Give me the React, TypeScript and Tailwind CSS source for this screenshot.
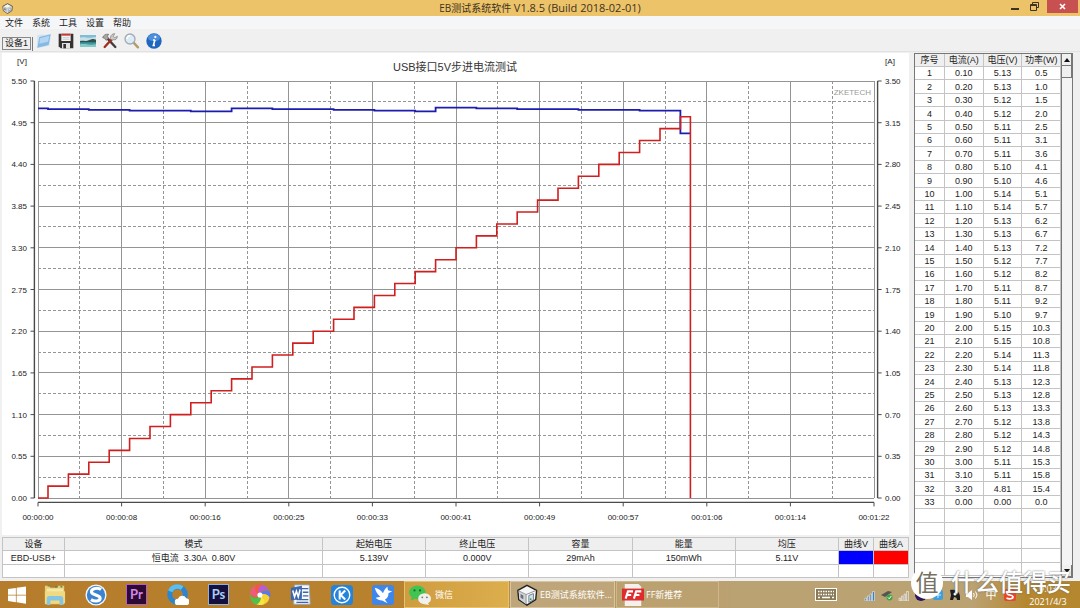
import type { ReactNode } from "react";

// --- Measured data ---
const voltages = [
  5.13, 5.13, 5.12, 5.12, 5.11, 5.11, 5.11, 5.1, 5.1, 5.14, 5.14, 5.13, 5.13, 5.13, 5.12, 5.12, 5.11,
  5.11, 5.1, 5.15, 5.15, 5.14, 5.14, 5.13, 5.13, 5.13, 5.12, 5.12, 5.12, 5.11, 5.11, 4.81, 0,
];
const powers = [
  0.5, 1.0, 1.5, 2.0, 2.5, 3.1, 3.6, 4.1, 4.6, 5.1, 5.7, 6.2, 6.7, 7.2, 7.7, 8.2, 8.7, 9.2, 9.7, 10.3,
  10.8, 11.3, 11.8, 12.3, 12.8, 13.3, 13.8, 14.3, 14.8, 15.3, 15.8, 15.4, 0,
];
const rows = voltages.map((v, i) => ({
  no: i + 1,
  current: i < 32 ? (i + 1) / 10 : 0,
  voltage: v,
  power: powers[i],
}));

const timeLabels = [
  "00:00:00", "00:00:08", "00:00:16", "00:00:25", "00:00:33", "00:00:41",
  "00:00:49", "00:00:57", "00:01:06", "00:01:14", "00:01:22",
];

// --- Chart geometry ---
const LEFT = 36;
const RIGHT = 872;
const TOP = 28;
const BOTTOM = 445;
const MAX_V = 5.5;
const MAX_A = 3.5;
const FIRST_STEP = 10;
const STEP = 20.4;

const xAt = (i: number) => LEFT + ((RIGHT - LEFT) * i) / 10;
const yAt = (i: number) => TOP + ((BOTTOM - TOP) * i) / 10;
const scaleY = (value: number, max: number) => BOTTOM - (value / max) * (BOTTOM - TOP);

function stepPath(start: number, values: number[], max: number) {
  let d = `M${LEFT} ${scaleY(start, max)}`;
  values.forEach((v, i) => {
    d += `H${LEFT + FIRST_STEP + STEP * i}V${scaleY(v, max)}`;
  });
  return d + `H${LEFT + FIRST_STEP * 2 + STEP * (values.length - 1)}`;
}

const active = rows.slice(0, 32);
const voltagePath = stepPath(5.139, active.map((r) => r.voltage), MAX_V);
const currentPath = stepPath(0, active.map((r) => r.current), MAX_A) + `V${BOTTOM}`;

function Chart() {
  const ticks = Array.from({ length: 11 }, (_, i) => i);
  const halves = ticks.slice(0, 10);
  return (
    <svg
      viewBox="0 0 907 482"
      className="block w-full h-auto bg-white text-[8px]"
      role="img"
      aria-label="USB接口5V步进电流测试"
    >
      {/* Grid */}
      <g stroke="#949494" strokeDasharray="3 2" shapeRendering="crispEdges">
        {halves.map((i) => (
          <g key={i}>
            <line x1={xAt(i + 0.5)} x2={xAt(i + 0.5)} y1={TOP} y2={BOTTOM} />
            <line x1={LEFT} x2={RIGHT} y1={yAt(i + 0.5)} y2={yAt(i + 0.5)} />
          </g>
        ))}
      </g>
      <g stroke="#949494" shapeRendering="crispEdges">
        {ticks.map((i) => (
          <g key={i}>
            <line x1={xAt(i)} x2={xAt(i)} y1={TOP} y2={BOTTOM} />
            <line x1={LEFT} x2={RIGHT} y1={yAt(i)} y2={yAt(i)} />
          </g>
        ))}
      </g>

      {/* Axes */}
      <g stroke="#4a4a4a" fill="none" strokeWidth="1.4">
        <path d={`M32.4 ${TOP}V${BOTTOM}M875.6 ${TOP}V${BOTTOM}M${LEFT} 449.4H${RIGHT}`} />
        {ticks.map((i) => (
          <path key={i} d={`M28.5 ${yAt(i)}h4M875.6 ${yAt(i)}h4M${xAt(i)} 449.4v4`} strokeWidth="1" />
        ))}
      </g>
      <g fill="#222">
        {ticks.map((i) => (
          <g key={i}>
            <text x="25" y={yAt(i) + 3} textAnchor="end">{(MAX_V - i * 0.55).toFixed(2)}</text>
            <text x="883" y={yAt(i) + 3}>{(MAX_A - i * 0.35).toFixed(2)}</text>
            <text x={xAt(i)} y="467" textAnchor="middle">{timeLabels[i]}</text>
          </g>
        ))}
        <text x="20" y="11" textAnchor="middle">[V]</text>
        <text x="888" y="11" textAnchor="middle">[A]</text>
      </g>
      <text x="453" y="18" textAnchor="middle" fill="#333" className="text-[11px]">
        USB接口5V步进电流测试
      </text>
      <text x="869" y="42" textAnchor="end" fill="#999">
        ZKETECH
      </text>

      {/* Curves */}
      <path d={voltagePath} fill="none" stroke="#1c1cae" strokeWidth="1.8" />
      <path d={currentPath} fill="none" stroke="#d01f1f" strokeWidth="1.6" />
    </svg>
  );
}

function Icon({ children, className = "size-4", box = "0 0 24 24" }: { children: ReactNode; className?: string; box?: string }) {
  return (
    <svg viewBox={box} className={`block shrink-0 ${className}`} fill="none" aria-hidden="true">
      {children}
    </svg>
  );
}

function CubeIcon({ className }: { className: string }) {
  return (
    <Icon className={className}>
      <path d="M2 7 12 1.500 22.500 7 21.500 17 12 23 3 17z" fill="#f6f6f4" stroke="#222" strokeWidth="1.500" />
      <path d="M3 8 11 12V22L4 17z" fill="#cfd3d6" />
      <path d="M3 7.500 11 11.500 22 7M11 11.500V22" stroke="#8a8f94" strokeWidth="1" />
      <path d="M14 12.500l5-2v7l-5 2.500z" fill="#c9e3ee" stroke="#778" />
      <path d="M5 11l3 1.500v4L5 15z" fill="#6b7075" />
      <circle cx="16" cy="16.500" r="1" fill="#37a24a" />
    </Icon>
  );
}

const tools = [
  {
    label: "打开",
    icon: (
      <Icon>
        <path d="M2 3 11 2l1 1 11-2-3 18L1 23z" fill="#d5e4ee" />
        <path d="M5 6 22 2l-3 16L2 22z" fill="#86b8e4" />
        <path d="M6 8 20 4l-2 9L5 16z" fill="#b4d6f2" />
      </Icon>
    ),
  },
  {
    label: "保存",
    icon: (
      <Icon>
        <path d="M1 1h22v22H4l-3-3z" fill="#373232" />
        <path d="M5 1h14v11H5z" fill="#f4f4f4" />
        <path d="M5 1h14v3H5z" fill="#c33b32" />
        <path d="M7 7h10M7 9.500h10" stroke="#bbb" />
        <path d="M6 15h12v8H6z" fill="#e2e2e2" />
        <path d="M8 16.500h4V23H8z" fill="#373232" />
      </Icon>
    ),
  },
  {
    label: "图片",
    icon: (
      <Icon>
        <path d="M0 2h24v20H0z" fill="#e9f1f2" />
        <path d="M0 3h24v9H0z" fill="#83bcd6" />
        <path d="M0 7c6-2 12 2 24-1v6H0z" fill="#c5e0e8" />
        <path d="M0 12c5-1 9 1 13-1s7-3 11-1v5H0z" fill="#33524b" />
        <path d="M0 14h24v7H0z" fill="#3f9aa6" />
        <path d="M0 17c8-2 14 2 24 0v4H0z" fill="#85c8c6" />
      </Icon>
    ),
  },
  {
    label: "工具",
    icon: (
      <Icon>
        <path d="M7 7 20 21" stroke="#443c3a" strokeWidth="3.500" strokeLinecap="round" />
        <path d="M1 7c1-4 5-6 9-5L8 5l2 3-4 3-2-3z" fill="#aaa7a2" stroke="#615e5a" />
        <path d="M15 9 4 21" stroke="#a12c22" strokeWidth="3.500" strokeLinecap="round" />
        <path d="M13 6c0-3 3-5 6-5l-2 4 2 2 4-2c0 4-3 6-6 5l-2 1-3-3z" fill="#cdcac5" stroke="#777" />
      </Icon>
    ),
  },
  {
    label: "放大",
    icon: (
      <Icon>
        <path d="M14 14 21 21.500" stroke="#b59b68" strokeWidth="3.500" strokeLinecap="round" />
        <circle cx="9" cy="9" r="7.500" fill="#dcebf6" stroke="#a2abb5" strokeWidth="2" />
        <path d="M4.500 9a5 5 0 0 1 5-5" stroke="#fff" strokeWidth="2" />
      </Icon>
    ),
  },
  {
    label: "关于",
    icon: (
      <Icon>
        <circle cx="12" cy="12" r="11.500" fill="#1f66bd" />
        <ellipse cx="12" cy="7" rx="9" ry="5.500" fill="#4c8fdc" />
        <path d="M13.500 10 11 18.500h2.500M10.500 10.500h3" stroke="#fff" strokeWidth="2.400" />
        <circle cx="14" cy="6" r="1.700" fill="#fff" />
      </Icon>
    ),
  },
];

function AdobeTile({ label, tone }: { label: string; tone: string }) {
  return (
    <span className={`flex size-[21px] items-center justify-center border font-['Lato',sans-serif] text-[13px] leading-none font-bold ${tone}`}>
      {label}
    </span>
  );
}

const launchers = [
  {
    label: "文件资源管理器",
    icon: (
      <Icon className="size-[22px]">
        <path d="M1 2h5l1 2h7l1-2h7v20H1z" fill="#e8cf77" />
        <path d="M3 5h18v15H3z" fill="#f5e7a6" />
        <path d="M1 8h22v13H1z" fill="#f0d983" />
        <path d="M4 2h3M12 3h3M18 3h2" stroke="#5c8a4a" strokeWidth="1.500" />
        <path d="M3 23v-7q0-3 3-3h12q3 0 3 3v7h-4v-5H7v5z" fill="#86c5e2" />
      </Icon>
    ),
  },
  {
    label: "搜狗浏览器",
    icon: (
      <Icon className="size-[22px]">
        <circle cx="12" cy="12" r="11.500" fill="#f5f8fb" />
        <circle cx="12" cy="12" r="10" fill="#3b83d0" />
        <path d="M17.500 6C14 3.500 7 4.500 7 8.500c0 4 9.500 3 9.500 7 0 3.500-6 4-10 1.500" stroke="#fff" strokeWidth="3.400" />
      </Icon>
    ),
  },
  { label: "Premiere", icon: <AdobeTile label="Pr" tone="bg-[#2d0a33] border-[#b35fc4] text-[#d586e6]" /> },
  {
    label: "QQ浏览器",
    icon: (
      <Icon className="size-[22px]">
        <circle cx="11.500" cy="11.500" r="8.500" stroke="#2b86cf" strokeWidth="5.500" />
        <path d="M3.500 8a8.500 8.500 0 0 1 13-3.500" stroke="#5dbdeb" strokeWidth="5" />
        <path d="M12 23a3.500 3.500 0 0 1 0-7 5 5 0 0 1 9-.500 3.800 3.800 0 0 1 .500 7.500z" fill="#fff" />
      </Icon>
    ),
  },
  { label: "Photoshop", icon: <AdobeTile label="Ps" tone="bg-[#150f3e] border-[#8fb3dd] text-[#a9cdf5]" /> },
  {
    label: "照片",
    icon: (
      <Icon className="size-[22px]">
        <path d="M12 12C7 10 5 4 10 1a11 11 0 0 0-9 9c2 4 7 5 11 2z" fill="#ef5b7f" />
        <path d="M12 12C9 7 12 1 18 2.500A11 11 0 0 0 8 1C5 5 7 10 12 12z" fill="#f25a3c" />
        <path d="M12 12c1-6 7-8 10.500-3.500A11 11 0 0 0 14 1c-4 2-5 7-2 11z" fill="#b45be0" />
        <path d="M12 12c6-3 11 1 9.500 6A11 11 0 0 0 22.500 8c-4-2-9-1-10.500 4z" fill="#5b78ec" />
        <path d="M12 12c5 2 6 8 1 11a11 11 0 0 0 9.500-8c-2-4-6-5-10.500-3z" fill="#f7d430" />
        <path d="M12 12c2 6-2 10-7 8.500a11 11 0 0 0 11 1.500c2-4 0-8-4-10z" fill="#f9e441" />
        <path d="M12 12c-3 5-9 5-11-1a11 11 0 0 0 7 11.500c4-2 6-6 4-10.500z" fill="#4fbf4d" />
        <circle cx="12" cy="12" r="2.800" fill="#fff" />
      </Icon>
    ),
  },
  {
    label: "Word",
    icon: (
      <Icon className="size-[22px]">
        <path d="M5 1h16l1 21H4z" fill="#f7f9fc" stroke="#93a9c8" />
        <path d="M12 5h8M14 9h6M14 13h6M7 17h13M7 20h13" stroke="#3c66aa" strokeWidth="1.500" />
        <path d="M1 4 13 2v14L1 18z" fill="#3c68ae" />
        <path d="m3 7 2 7 2-6 2 6 2-8" stroke="#fff" strokeWidth="1.700" />
      </Icon>
    ),
  },
  {
    label: "酷狗音乐",
    icon: (
      <Icon className="size-[22px]">
        <rect x="0" y="1" width="24" height="22" rx="4" fill="#2484dc" />
        <circle cx="12" cy="12" r="8.500" stroke="#fff" strokeWidth="1.500" />
        <path d="M9.500 7v10M15.500 7l-5 5 5 5" stroke="#fff" strokeWidth="2.300" />
      </Icon>
    ),
  },
  {
    label: "迅雷",
    icon: (
      <Icon className="size-[22px]">
        <rect x="0" y="1" width="24" height="22" rx="3" fill="#3f86ea" />
        <path d="M3 4c4 1 7 3 9 6 1-3 3-6 5-7 0 2 0 3 1 4l4 1-4 2c0 4-2 6-4 7l3 4-6-3c-3 0-5-1-7-3l5-1C6 11 4 8 3 4z" fill="#fff" />
      </Icon>
    ),
  },
];

function Signal({ color }: { color: string }) {
  return (
    <Icon className="size-3" box="0 0 12 12">
      <path d="M1 12V9h1.500v3zM3.500 12V7H5v5zM6 12V5h1.500v7zM8.500 12V2.500h2V12z" fill={color} stroke="#fff" strokeWidth=".5" />
    </Icon>
  );
}

function TrayIcons() {
  return (
    <div className="flex items-center gap-[5px]">
      <Signal color="#3e7fc4" />
      <Icon className="size-3" box="0 0 12 12">
        <path d="M0 6 7 2l4 1-7 5z" fill="#555" />
        <circle cx="8.500" cy="8.500" r="3" fill="#3ba546" />
        <path d="m7 8.500 1.200 1.300L10.300 7" stroke="#fff" />
      </Icon>
      <Signal color="#b5aa94" />
      <Icon className="size-3" box="0 0 12 12">
        <circle cx="6" cy="6" r="6" fill="#2b165c" />
      </Icon>
      <Icon className="size-3" box="0 0 12 12">
        <rect x="1" y="1" width="10" height="10" rx="2" fill="#3d9fdc" />
        <path d="M3 6h6M6 3v6" stroke="#d7f0ff" />
      </Icon>
      <Icon className="size-3" box="0 0 12 12">
        <path d="M1 1c5-1 10 1 10 7v3H8c0-2-1-3-3-3l-1 3H1l1-5z" fill="#1d1d1f" />
        <circle cx="6" cy="5" r="1.500" fill="#fff" />
      </Icon>
      <Icon className="size-3" box="0 0 12 12">
        <path d="M0 4h2l4-3v10L2 8H0z" fill="#fff" />
        <path d="M7.500 4q1.500 2 0 4M9.500 2.500q3 3.500 0 7" stroke="#fff" />
      </Icon>
      <span className="w-4 text-center text-[11px] leading-none">中</span>
      <Icon className="size-3" box="0 0 12 12">
        <rect width="12" height="12" rx="2" fill="#e8472e" />
        <path d="M9 3C6 1.500 3 2.500 3 4.200 3 6.500 9 5.500 9 8c0 2-4 2.300-6.500 1" stroke="#fff" strokeWidth="1.700" />
      </Icon>
    </div>
  );
}

const summary = [
  ["设备", "EBD-USB+", "w-[62px]"],
  ["模式", "恒电流  3.30A  0.80V", "w-[258px]"],
  ["起始电压", "5.139V", ""],
  ["终止电压", "0.000V", ""],
  ["容量", "29mAh", ""],
  ["能量", "150mWh", ""],
  ["均压", "5.11V", ""],
  ["曲线V", "", "w-[35px]"],
  ["曲线A", "", "w-[35px]"],
];

function SummaryTable() {
  return (
    <table className="w-full table-fixed border-collapse border border-[#777] bg-white text-center text-[9px] leading-3 whitespace-pre">
      <thead>
        <tr className="h-[13px] bg-[#efefef]">
          {summary.map(([title, , width]) => (
            <th key={title} className={`border border-[#c4c4c4] p-0 font-normal ${width}`}>{title}</th>
          ))}
        </tr>
      </thead>
      <tbody>
        <tr className="h-[14px]">
          {summary.map(([title, value]) => (
            <td
              key={title}
              className={`border border-[#c4c4c4] p-0 ${title === "曲线V" ? "bg-[#0000ff]" : title === "曲线A" ? "bg-[#ff0000]" : ""}`}
            >
              {value}
            </td>
          ))}
        </tr>
        <tr className="h-[13px]">
          {summary.map(([title]) => (
            <td key={title} className="border border-[#c4c4c4] p-0" />
          ))}
        </tr>
      </tbody>
    </table>
  );
}

function DataTable() {
  const cell = "border-r border-b border-[#c4c4c4] p-0";
  return (
    <div className="flex w-[159px] shrink-0 self-stretch border border-[#777] bg-white">
      <table className="w-[146px] table-fixed self-start border-separate border-spacing-0 text-center text-[9px] leading-3">
        <thead>
          <tr className="h-[13px] bg-[#efefef]">
            <th className={`${cell} w-[30px] font-normal`}>序号</th>
            <th className={`${cell} font-normal`}>电流(A)</th>
            <th className={`${cell} font-normal`}>电压(V)</th>
            <th className={`${cell} font-normal`}>功率(W)</th>
          </tr>
        </thead>
        <tbody>
          {rows.map((r) => (
            <tr key={r.no} className="h-[13px] nth-[5n+2]:h-[14px] nth-[5n+4]:h-[14px]">
              <td className={cell}>{r.no}</td>
              <td className={cell}>{r.current.toFixed(2)}</td>
              <td className={cell}>{r.voltage.toFixed(2)}</td>
              <td className={cell}>{r.power.toFixed(1)}</td>
            </tr>
          ))}
          {[0, 1, 2, 3, 4].map((n) => (
            <tr key={n} className="h-[13px] nth-[5n+2]:h-[14px] nth-[5n+4]:h-[14px]">
              <td className={cell} />
              <td className={cell} />
              <td className={cell} />
              <td className={cell} />
            </tr>
          ))}
        </tbody>
      </table>
      <div className="flex flex-1 flex-col border-l border-[#777] bg-[#f4f4f4]">
        <button aria-label="向上滚动" className="flex h-3 items-center justify-center border-r border-b border-[#777] bg-[#f0f0f0]">
          <Icon className="size-[6px]" box="0 0 6 6"><path d="M3 1 6 5H0z" fill="#111" /></Icon>
        </button>
        <div className="h-3 border-r border-b border-[#777] bg-[#f0f0f0]" />
        <div className="flex-1" />
        <button aria-label="向下滚动" className="flex h-3 items-center justify-center border-r border-b border-[#777] bg-[#f0f0f0]">
          <Icon className="size-[6px]" box="0 0 6 6"><path d="M3 5 6 1H0z" fill="#111" /></Icon>
        </button>
      </div>
    </div>
  );
}

export default function App() {
  return (
    <div className="relative flex min-h-screen flex-col bg-[#f0f0f0] font-['Liberation_Sans','Noto_Sans_CJK_SC',sans-serif] text-[#222]">
      {/* --- Title bar --- */}
      <header className="flex h-4 items-center bg-[#edc36a] pl-[2px]">
        <CubeIcon className="size-[11px]" />
        <h1 className="flex-1 pl-[58px] text-center font-['Open_Sans','Noto_Sans_CJK_SC',sans-serif] text-[10px] leading-4 text-[#3d3320]">
          EB测试系统软件 <span className="text-[11px]">V1.8.5 (Build 2018-02-01)</span>
        </h1>
        <div className="flex h-full items-start gap-[5px] pr-[2px]">
          <button aria-label="最小化" className="flex h-3 w-3 items-end justify-center pb-[2px]">
            <span className="h-[2px] w-2 bg-[#3d3320]" />
          </button>
          <button aria-label="还原" className="flex h-[13px] w-4 items-center justify-center">
            <Icon className="size-[9px]" box="0 0 9 9">
              <path d="M2.500 2.500v-2h6v5h-2M.5 2.500h6v6h-6zM.5 3.500h6" stroke="#3d3320" />
            </Icon>
          </button>
          <button aria-label="关闭" className="flex h-[13px] w-[31px] items-center justify-center bg-[#c75050]">
            <Icon className="size-[7px]" box="0 0 7 7">
              <path d="m1 1 5 5M6 1 1 6" stroke="#fff" strokeWidth="1.600" />
            </Icon>
          </button>
        </div>
      </header>

      {/* --- Menu --- */}
      <nav className="flex h-[13px] items-center gap-[9px] bg-[#f5f6f8] pl-[5px] text-[9px] leading-3">
        {["文件", "系统", "工具", "设置", "帮助"].map((m) => (
          <button key={m}>{m}</button>
        ))}
      </nav>

      {/* --- Toolbar --- */}
      <div className="flex h-[23px] items-center border-b border-[#e2e2e2] pl-[2px]">
        <div className="mr-[3px] self-end border-r border-[#777] pr-[1px] pb-px">
          <button className="block h-[13px] w-[29px] border border-[#888] text-[9px] leading-[11px]">设备1</button>
        </div>
        <div className="flex items-center gap-[6px] pt-[2px]">
          {tools.map((t) => (
            <button key={t.label} aria-label={t.label}>{t.icon}</button>
          ))}
        </div>
      </div>

      {/* --- Workspace --- */}
      <main className="flex flex-1 gap-[5px] pt-px pr-[7px] pb-[3px] pl-[2px]">
        <div className="flex min-w-0 flex-1 flex-col justify-between">
          <Chart />
          <SummaryTable />
        </div>
        <DataTable />
      </main>

      {/* --- Taskbar --- */}
      <footer className="flex h-[27px] items-center bg-[linear-gradient(to_right,#b57d2b_0%,#b9822e_38%,#bba273_68%,#bba273_90%,#b5872f_95%)] font-['Open_Sans','Noto_Sans_CJK_SC',sans-serif] text-white">
        <button aria-label="开始" className="flex w-[34px] justify-center">
          <Icon className="size-[18px]">
            <path d="M0 4 10.500 2.500v9H0zM11.500 2.300 24 .5v11H11.500zM0 12.500h10.500v9L0 20zM11.500 12.500H24v11l-12.500-1.800z" fill="#fff" />
          </Icon>
        </button>
        {launchers.map((l) => (
          <button key={l.label} aria-label={l.label} className="flex w-[41px] justify-center">{l.icon}</button>
        ))}
        <div className="flex h-full flex-1 gap-px pl-px text-[9px]">
          <button className="flex h-full w-[105px] items-center gap-1 border border-[#e4c272] bg-linear-to-r from-[#cf9c3f] to-[#dcae4c] pl-1">
            <Icon className="size-[22px]">
              <ellipse cx="9" cy="9" rx="9" ry="7.500" fill="#42c452" />
              <path d="m3 14-1 4 5-2z" fill="#42c452" />
              <circle cx="6" cy="7" r="1.200" fill="#1b6b29" />
              <circle cx="12" cy="7" r="1.200" fill="#1b6b29" />
              <ellipse cx="17" cy="16" rx="7" ry="6" fill="#f0f0ee" />
              <path d="m20 20 2 3-5-1z" fill="#f0f0ee" />
              <circle cx="14.500" cy="14.500" r="1" fill="#777" />
              <circle cx="19.500" cy="14.500" r="1" fill="#777" />
            </Icon>
            微信
          </button>
          <button className="flex h-full w-[105px] items-center gap-[2px] border border-[#d6c6a4] bg-[#bfa67a] pl-[5px] whitespace-nowrap">
            <CubeIcon className="size-[22px]" />
            EB测试系统软件...
          </button>
          <button className="flex h-full w-[103px] items-center gap-[2px] border border-[#cdb88e] bg-[#bba070] pl-[5px]">
            <Icon className="size-[22px]">
              <path d="M3 0h15l3 3v21H3z" fill="#f4f0ee" />
              <path d="M0 5h24v13H0z" fill="#de2c2c" />
              <path d="M4 16 6.500 8H12M5.500 12H10M13 16l2.500-8H21M14.500 12H19" stroke="#fff" strokeWidth="2.300" />
            </Icon>
            FF新推荐
          </button>
        </div>
        <button aria-label="触摸键盘" className="mr-[27px]">
          <Icon className="h-[13px] w-[22px]" box="0 0 22 13">
            <rect x=".5" y=".5" width="21" height="12" fill="#8a7a58" stroke="#fff" />
            <path d="M3 3.500h16M3 6.500h16" stroke="#fff" strokeWidth="1.500" strokeDasharray="1.500 1" />
            <path d="M3 9.500h2M7 9.500h8M17 9.500h2" stroke="#fff" strokeWidth="1.500" />
          </Icon>
        </button>
        <TrayIcons />
        <div className="w-[64px] text-center text-[9px] leading-[13px]">
          <div>9:03</div>
          <div>2021/4/3</div>
        </div>
      </footer>

      {/* --- Watermark --- */}
      <div className="pointer-events-none absolute right-[9px] bottom-[9px] flex items-center gap-2 text-white">
        <span className="flex size-8 items-center justify-center rounded-full bg-white text-[23px] leading-none text-[#77705f]">
          值
        </span>
        <span className="text-[24px] leading-8 font-medium text-shadow-[0_0_2px_#666]">什么值得买</span>
      </div>
    </div>
  );
}
